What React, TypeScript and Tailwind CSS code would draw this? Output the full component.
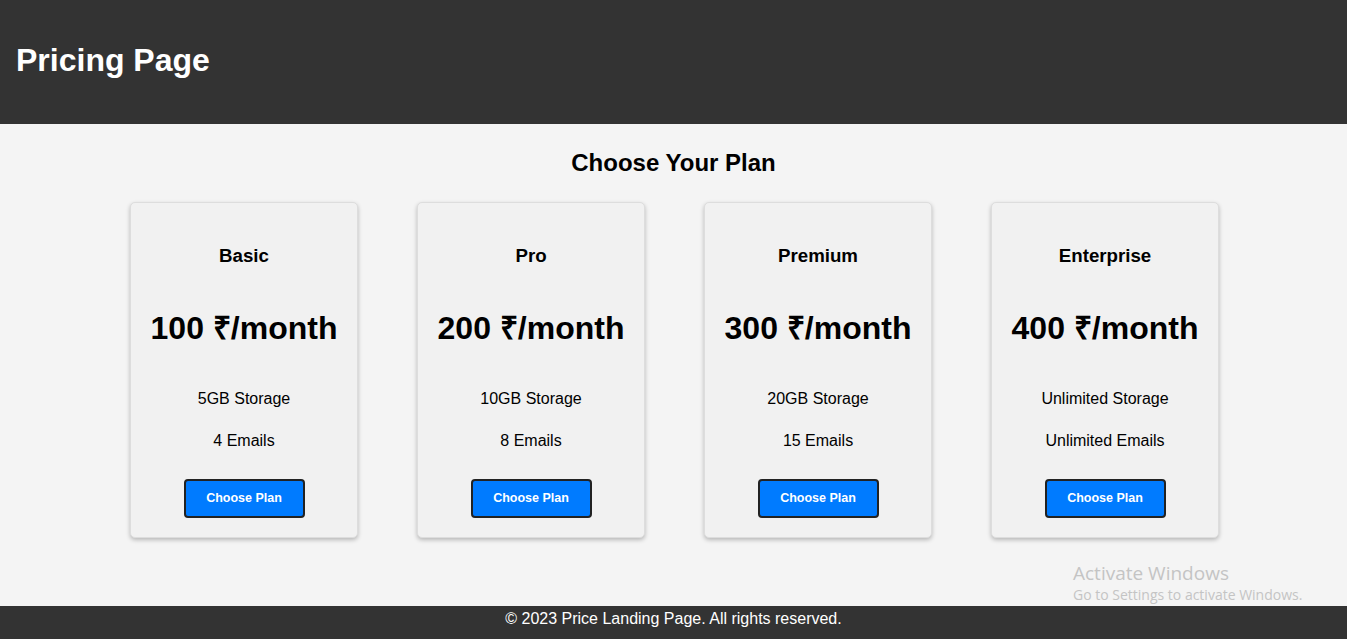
import React from "react";

const plans = [
  { name: "Basic", price: "100", storage: "5GB Storage", emails: "4 Emails" },
  { name: "Pro", price: "200", storage: "10GB Storage", emails: "8 Emails" },
  { name: "Premium", price: "300", storage: "20GB Storage", emails: "15 Emails" },
  { name: "Enterprise", price: "400", storage: "Unlimited Storage", emails: "Unlimited Emails" },
];

export default function App() {
  return (
    <div className="relative min-h-[639px] flex flex-col bg-[#f4f4f4] text-black font-['Liberation_Sans',Arial,sans-serif]">
      <header className="h-[124px] bg-[#333333] flex items-center px-4 pb-1">
        <h1 className="text-[32px] leading-[37px] font-bold text-white">Pricing Page</h1>
      </header>
      <main className="flex-1 flex flex-col items-center">
        <h2 className="mt-[25px] text-[24px] leading-[28px] font-bold">Choose Your Plan</h2>
        <div className="mt-[25px] flex gap-[59px] pl-[2px]">
          {plans.map((p) => (
            <div
              key={p.name}
              className="w-[228px] h-[336px] bg-[#f1f1f1] border border-[#dddddd] rounded-[5px] shadow-[0_2px_4px_rgba(0,0,0,0.25)] flex flex-col items-center pt-[21px]"
            >
              <h3 className="mt-[21px] text-[18.7px] leading-[22px] font-bold">{p.name}</h3>
              <div className="mt-[43px] text-[32px] leading-[37px] font-bold whitespace-nowrap">
                {p.price} ₹/month
              </div>
              <p className="mt-[43px] text-[16px] leading-[18px]">{p.storage}</p>
              <p className="mt-6 text-[16px] leading-[18px]">{p.emails}</p>
              <button className="mt-[29px] w-[121px] h-[39px] bg-[#007bff] border-2 border-[#222] rounded-[4px] text-white text-[12.5px] font-bold">
                Choose Plan
              </button>
            </div>
          ))}
        </div>
      </main>
      <footer className="h-[33px] bg-[#333333] text-white text-center text-[16px] leading-[18px] pt-1">
        © 2023 Price Landing Page. All rights reserved.
      </footer>
      <div className="absolute left-[1073px] top-[560px] font-['Open_Sans','Noto_Sans',sans-serif] text-[#c4c4c4] pointer-events-none">
        <div className="text-[19px] leading-[26px]">Activate Windows</div>
        <div className="text-[14px] leading-[18px]">Go to Settings to activate Windows.</div>
      </div>
    </div>
  );
}
